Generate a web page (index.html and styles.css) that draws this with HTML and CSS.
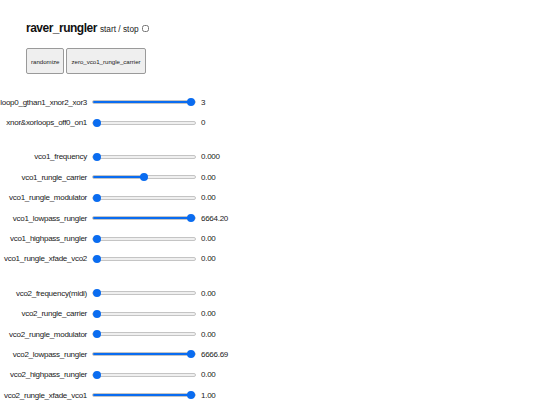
FILE: index.html
```html
<!DOCTYPE html>
<html>
<head>
<meta charset="utf-8">
<link rel="stylesheet" href="styles.css">
</head>
<body>
<div class="page">
  <div class="header">
    <h1 class="title">raver_rungler</h1>
    <label class="toggle">start / stop <input type="checkbox" class="check"></label>
  </div>
  <div class="buttons">
    <button class="btn">randomize</button>
    <button class="btn">zero_vco1_rungle_carrier</button>
  </div>
  <div class="group">
    <span class="lbl">loop0_gthan1_xnor2_xor3</span><input class="rng" type="range" value="100" style="--p:100%"><span class="val">3</span>
    <span class="lbl">xnor&amp;xorloops_off0_on1</span><input class="rng" type="range" value="0" style="--p:0%"><span class="val">0</span>
  </div>
  <div class="group">
    <span class="lbl">vco1_frequency</span><input class="rng" type="range" value="0" style="--p:0%"><span class="val">0.000</span>
    <span class="lbl">vco1_rungle_carrier</span><input class="rng" type="range" value="50" style="--p:50%"><span class="val">0.00</span>
    <span class="lbl">vco1_rungle_modulator</span><input class="rng" type="range" value="0" style="--p:0%"><span class="val">0.00</span>
    <span class="lbl">vco1_lowpass_rungler</span><input class="rng" type="range" value="100" style="--p:100%"><span class="val">6664.20</span>
    <span class="lbl">vco1_highpass_rungler</span><input class="rng" type="range" value="0" style="--p:0%"><span class="val">0.00</span>
    <span class="lbl">vco1_rungle_xfade_vco2</span><input class="rng" type="range" value="0" style="--p:0%"><span class="val">0.00</span>
  </div>
  <div class="group">
    <span class="lbl">vco2_frequency(midi)</span><input class="rng" type="range" value="0" style="--p:0%"><span class="val">0.00</span>
    <span class="lbl">vco2_rungle_carrier</span><input class="rng" type="range" value="0" style="--p:0%"><span class="val">0.00</span>
    <span class="lbl">vco2_rungle_modulator</span><input class="rng" type="range" value="0" style="--p:0%"><span class="val">0.00</span>
    <span class="lbl">vco2_lowpass_rungler</span><input class="rng" type="range" value="100" style="--p:100%"><span class="val">6666.69</span>
    <span class="lbl">vco2_highpass_rungler</span><input class="rng" type="range" value="0" style="--p:0%"><span class="val">0.00</span>
    <span class="lbl">vco2_rungle_xfade_vco1</span><input class="rng" type="range" value="100" style="--p:100%"><span class="val">1.00</span>
  </div>
</div>
</body>
</html>
```
FILE: styles.css
```css
html, body {
  margin: 0;
  padding: 0;
  background: #ffffff;
}
body {
  font-family: "Liberation Sans", Arial, sans-serif;
  color: #1a1a1a;
}
.page {
  display: flex;
  flex-direction: column;
  padding-top: 18px;
}
.header {
  display: flex;
  align-items: center;
  gap: 3px;
  padding-left: 26px;
  height: 20px;
}
.title {
  margin: 0;
  font-size: 12px;
  font-weight: bold;
  color: #111;
  letter-spacing: -0.5px;
}
.toggle {
  font-size: 8.3px;
  display: flex;
  align-items: center;
  gap: 3px;
  padding-top: 1px;
  color: #1a1a1a;
}
.check {
  margin: 0;
  width: 7px;
  height: 7px;
}
.buttons {
  display: flex;
  gap: 2px;
  padding-left: 26px;
  margin-top: 10px;
}
.btn {
  font-family: inherit;
  font-size: 6.1px;
  height: 26px;
  padding: 0 4px;
  background: #efefef;
  border: 1px solid #9a9a9a;
  border-radius: 2px;
  color: #1a1a1a;
}
.group {
  display: grid;
  grid-template-columns: 87px 104px auto;
  column-gap: 5px;
  grid-auto-rows: 20.4px;
  align-items: center;
  font-size: 8px;
  letter-spacing: -0.27px;
}
.buttons + .group { margin-top: 18px; }
.group + .group { margin-top: 14px; }
.lbl {
  text-align: right;
  white-space: nowrap;
}
.val {
  white-space: nowrap;
}
.rng {
  -webkit-appearance: none;
  appearance: none;
  margin: 0;
  width: 104px;
  height: 4px;
  border-radius: 3px;
  border: 1px solid #c4c4c4;
  box-sizing: border-box;
  background: linear-gradient(to right, #0a6cf0 0, #0a6cf0 var(--p), #efefef var(--p), #efefef 100%);
}
.rng::-webkit-slider-thumb {
  -webkit-appearance: none;
  appearance: none;
  width: 8px;
  height: 8px;
  border-radius: 50%;
  background: #0a6cf0;
  border: none;
}
```
